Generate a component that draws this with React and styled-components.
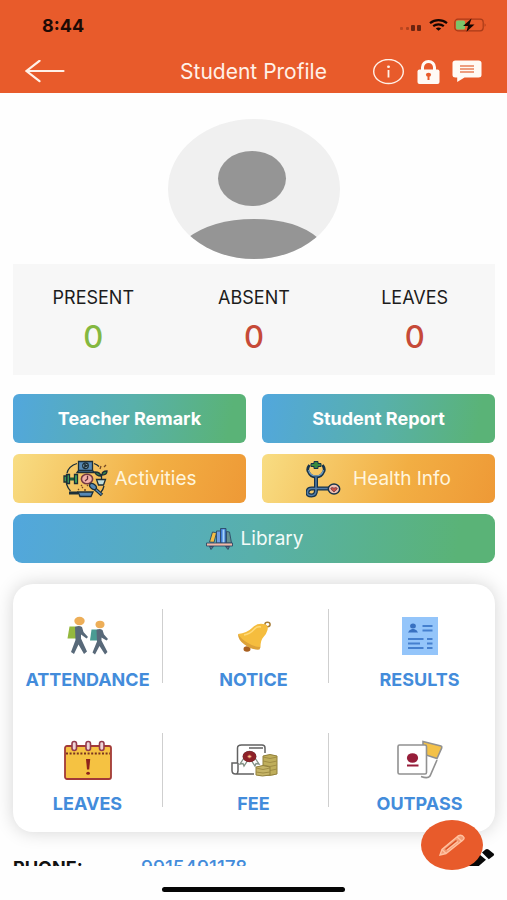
import styled, { createGlobalStyle, css } from "styled-components";

const GlobalStyle = createGlobalStyle`
  * {
    box-sizing: border-box;
  }

  body {
    margin: 0;
    background: #fefefe;
    font-family: Inter, Roboto, "Liberation Sans", sans-serif;
  }

  button {
    padding: 0;
    border: none;
    background: none;
    color: inherit;
    font: inherit;
    cursor: pointer;
  }

  svg {
    display: block;
    flex-shrink: 0;
  }
`;

const Screen = styled.div`
  position: relative;
  display: flex;
  flex-direction: column;
  height: 100vh;
  overflow: hidden;
`;

const Header = styled.header`
  background: #e85b2b;
  color: #fff1e8;
`;

const StatusBar = styled.div`
  display: flex;
  align-items: center;
  justify-content: space-between;
  height: 50px;
  padding: 0 20px 0 42px;
  color: #1d0a05;
  font-size: 18px;
  font-weight: 700;
`;

const StatusIcons = styled.div`
  display: flex;
  align-items: center;
  gap: 6px;
`;

const TitleBar = styled.div`
  display: grid;
  grid-template-columns: 1fr auto 1fr;
  align-items: center;
  height: 43px;
  padding: 0 25px;
`;

const Title = styled.h1`
  margin: 0;
  font-size: 21px;
  font-weight: 400;
  line-height: 24px;
`;

const HeaderActions = styled.div`
  display: flex;
  align-items: center;
  justify-content: flex-end;
  gap: 12px;
`;

const BackButton = styled.button`
  justify-self: start;
`;

const Content = styled.main`
  flex: 1;
  min-height: 0;
  padding: 26px 12px 0 13px;
  overflow-y: auto;
  scrollbar-width: none;
`;

const Avatar = styled.div`
  display: flex;
  justify-content: center;
  margin-bottom: 5px;
`;

const Stats = styled.dl`
  display: grid;
  grid-template-columns: repeat(3, 1fr);
  margin: 0 0 19px;
  padding: 24px 0 19px;
  background: #f7f7f7;
  text-align: center;
`;

const StatLabel = styled.dt`
  color: #1c1c1c;
  font-size: 18px;
  line-height: 20px;
`;

const StatValue = styled.dd`
  margin: 10px 0 0;
  color: ${({ $good }) => ($good ? "#84b840" : "#c64a38")};
  font-size: 31px;
  font-weight: 500;
  line-height: 38px;
`;

const Actions = styled.div`
  display: grid;
  grid-template-columns: 1fr 1fr;
  gap: 11px 16px;
  margin-bottom: 21px;
`;

const ActionButton = styled.button`
  display: flex;
  align-items: center;
  justify-content: center;
  gap: 7px;
  height: 49px;
  border-radius: 6px;
  background: linear-gradient(100deg, #52a7dd, #58b0ab 50%, #5ab377 92%);
  color: #fff;
  font-size: 18px;
  font-weight: 700;

  ${({ $tone }) =>
    $tone === "warm" &&
    css`
      background: linear-gradient(110deg, #f8dd83, #f2ae43 60%, #ee9936);
      color: #fff5dc;
      font-size: 19px;
      font-weight: 400;
    `}

  ${({ $wide }) =>
    $wide &&
    css`
      grid-column: 1 / -1;
      border-radius: 9px;
      color: #f3fbf8;
      font-size: 19px;
      font-weight: 400;
    `}
`;

const Menu = styled.nav`
  display: grid;
  grid-template-columns: repeat(3, 1fr);
  gap: 50px 16px;
  padding: 25px 0;
  border-radius: 20px;
  background: #fff;
  box-shadow: 0 0 18px rgba(0, 0, 0, 0.17);
`;

const MenuItem = styled.button`
  display: flex;
  flex-direction: column;
  align-items: center;
  gap: 14px;
  height: 74px;
  padding-top: 7px;
  border-right: 1px solid #cfcfcf;
  color: #438cdb;
  font-size: 18px;
  font-weight: 700;
  line-height: 20px;

  &:nth-child(3n) {
    border-right-color: transparent;
  }
`;

const ContactRow = styled.div`
  display: grid;
  grid-template-columns: 128px 1fr auto;
  align-items: center;
  height: 50px;
  margin-top: 11px;
  color: #111;
  font-size: 18px;
  font-weight: 700;
  line-height: 20px;
`;

const Phone = styled.a`
  color: #438cdb;
  font-size: 19px;
  font-weight: 500;
  text-decoration: none;
`;

const EditButton = styled.button`
  align-self: start;
  padding-top: 4px;
`;

const Footer = styled.footer`
  display: flex;
  justify-content: center;
  height: 34px;
  padding-top: 21px;
`;

const HomeIndicator = styled.div`
  width: 36%;
  height: 5px;
  border-radius: 3px;
  background: #050505;
`;

const Fab = styled.button`
  position: absolute;
  right: 24px;
  bottom: 30px;
  display: grid;
  place-items: center;
  width: 62px;
  height: 50px;
  border-radius: 50%;
  background: #e85b2b;
`;

const SignalIcon = () => (
  <svg width="24" height="14" viewBox="0 0 24 14" fill="#6b2410">
    <rect x="1" y="9" width="3" height="3" rx="1" opacity="0.35" />
    <rect x="7" y="9" width="3" height="3" rx="1" opacity="0.45" />
    <rect x="12" y="7" width="4" height="6" rx="1" />
    <rect x="18" y="7" width="4" height="6" rx="1" />
  </svg>
);

const WifiIcon = () => (
  <svg width="19" height="12" viewBox="0 0 19 12" fill="none" stroke="#120502" strokeWidth="2.2">
    <path d="M1 4.2C6 0.2 13 0.2 18 4.2" />
    <path d="M4.2 7.1C7.2 4.7 11.8 4.7 14.8 7.1" />
    <path d="M9.5 11.8 6.8 9.4Q9.5 7.4 12.2 9.4Z" fill="#120502" stroke="none" />
  </svg>
);

const BatteryIcon = () => (
  <svg width="33" height="14" viewBox="0 0 33 14">
    <rect x="0.8" y="1.2" width="28.4" height="11.6" rx="3" fill="none" stroke="#a93b18" strokeWidth="1.2" />
    <rect x="2" y="2.4" width="9" height="9.2" rx="1.6" fill="#7cc46a" />
    <path d="M30.6 5.2v3.6q2-1.8 0-3.6" fill="#a93b18" />
    <path d="m17.500 0.500-8.500 7.500h5l-1.500 5.800 8-7.300h-5z" fill="#120502" />
  </svg>
);

const ArrowIcon = () => (
  <svg width="40" height="24" viewBox="0 0 40 24" fill="none" stroke="#fff1e8" strokeWidth="2.2" strokeLinecap="round">
    <path d="M1.500 11H38.500M14.500 0.800 1.500 11l13 10.200" />
  </svg>
);

const InfoIcon = () => (
  <svg width="32" height="26" viewBox="0 0 32 26">
    <ellipse cx="15.500" cy="12.500" rx="14.800" ry="12" fill="none" stroke="#fff1e8" strokeWidth="1.400" />
    <ellipse cx="15.500" cy="7.800" rx="1.500" ry="1.200" fill="#fff1e8" />
    <path d="M15.500 11v7.500" stroke="#fff1e8" strokeWidth="1.800" />
  </svg>
);

const LockIcon = () => (
  <svg width="23" height="26" viewBox="0 0 23 26">
    <path d="M5.500 12V8.200a6 5.800 0 0 1 12 0V12" fill="none" stroke="#fffaf5" strokeWidth="3" />
    <rect x="0.500" y="10.500" width="22" height="14.500" rx="2" fill="#fffaf5" />
    <ellipse cx="11.500" cy="15.800" rx="2.600" ry="2" fill="#e85b2b" />
    <path d="M11.500 16v5" stroke="#e85b2b" strokeWidth="2" />
  </svg>
);

const ChatIcon = () => (
  <svg width="30" height="24" viewBox="0 0 30 24">
    <path d="M3.500 0.500h23a3 2.500 0 0 1 3 2.500v12a3 2.500 0 0 1-3 2.500H12.500L5.200 22v-4.500H3.500A3 2.500 0 0 1 .5 15V3a3 2.500 0 0 1 3-2.500Z" fill="#fffaf5" />
    <path d="M8 6h14M8 9h14M8 12h14" stroke="#e98058" strokeWidth="1.300" />
  </svg>
);

const AvatarIcon = () => (
  <svg width="172" height="140" viewBox="0 0 172 140">
    <defs>
      <clipPath id="avatar-clip">
        <ellipse cx="86" cy="70" rx="86" ry="70" />
      </clipPath>
    </defs>
    <g clipPath="url(#avatar-clip)">
      <rect width="172" height="141" fill="#f0f0f0" />
      <ellipse cx="84" cy="59.500" rx="34" ry="27.500" fill="#959595" />
      <path d="M18 120Q44 100 86 100t64 19v21H18Z" fill="#959595" />
    </g>
  </svg>
);

const ActivitiesIcon = () => (
  <svg width="45" height="38" viewBox="0 0 45 38" fill="none" stroke="#1c2f38" strokeWidth="1.300">
    <path d="M4 13C5 9 9 5 14 3.500M3.500 24c1 3 2 5 4 7M31 3.500q3 1 5 3M41 26q-1 4-3 6" />
    <path d="M15.500 1.500h14v9h-14zM14 12.500h17.500l-2-2h-14z" fill="#5689b5" />
    <circle cx="22.500" cy="5.800" r="2.800" fill="#a9d1e9" />
    <path d="m21.800 4.500 2.400 1.300-2.400 1.300z" fill="#1c2f38" />
    <path d="M5 19h8" stroke="#1d5c3b" strokeWidth="3" />
    <path d="M1 16h3v6H1zM3.500 14.500h3v9h-3zM11.500 14.500h3v9h-3z" fill="#43a860" />
    <ellipse cx="24" cy="19" rx="5.600" ry="4.800" fill="#f3b1a7" stroke="#743a44" strokeWidth="1.600" />
    <path d="M24.500 15.800V19L22 21" stroke="#602e3b" />
    <path d="M38.500 20v-6" />
    <path d="M38 16q-5 0-6-4 5 0 6 4Zm1-1q0-4 5-4 0 4-5 4Z" fill="#398b4a" />
    <path d="M33.500 19.500h9l-2 5.500h-5z" fill="#c3ddd8" />
    <path d="m37 9 1-3m3 1 2-2M15 29l1 1m3-3 1 1m4-3 1 1m-4 4h2m-5-4 1-1" stroke="#754a25" />
    <path d="m31 28 8 7" stroke="#1c2f38" strokeWidth="3.600" />
    <path d="m31 28 7.500 6.500" stroke="#5689b5" strokeWidth="1.500" />
    <ellipse cx="30" cy="26.500" rx="3.800" ry="2.400" fill="#5689b5" transform="rotate(38 30 26.500)" />
    <path d="M6 33h9" strokeWidth="3" />
    <path d="M15 32h15l-2 4.500H17z" fill="#5689b5" />
  </svg>
);

const HealthIcon = () => (
  <svg width="40" height="38" viewBox="0 0 40 38" fill="none" stroke="#17334a">
    <path d="M3.500 5Q0.500 9 2.500 12q2 5 7.500 5t7.500-5q2-3-1-7" strokeWidth="2.800" />
    <path d="M2.500 10q1.500 6 7.500 6t7.500-6" stroke="#6d9cc3" strokeWidth="1.200" />
    <path d="M10 17v13q0 5.500-4.500 5.500T1.500 32t4-3.500H24" strokeWidth="4" />
    <path d="M10 17v13q0 5.500-4.500 5.500T1.500 32t4-3.500H24" stroke="#527da8" strokeWidth="1.500" />
    <path d="M8 1.500h4v2h3v3h-3v2H8v-2H5v-3h3z" fill="#398b3e" strokeWidth="1" />
    <ellipse cx="28" cy="29" rx="5.700" ry="5" fill="#efc0b4" strokeWidth="1.500" />
    <path d="m28 32-3.200-3q.4-2.500 3.200-.8 2.800-1.700 3.200.8z" fill="#c95045" stroke="#743a44" strokeWidth="0.800" />
  </svg>
);

const LibraryIcon = () => (
  <svg width="29" height="24" viewBox="0 0 29 24" stroke="#2c4a66" strokeWidth="0.900">
    <path d="m4.500 15 3-10 4 .8-2.500 9.500z" fill="#f4bd42" />
    <path d="M11.500 4h4v12h-4z" fill="#6f9fe4" />
    <path d="M15.500 1.500H21V16h-5.500z" fill="#3e7bd8" />
    <path d="M18.500 2.500v13" stroke="#a5d4f8" strokeWidth="1.900" />
    <path d="m21.500 4.500 3 .5 2 11h-5z" fill="#65918e" />
    <path d="M1.500 16h26v3h-26z" fill="#f1b8a8" />
    <path d="M4.500 19.500h4L6 22.500zm16 0h4L23 22.500z" fill="#5c7188" />
  </svg>
);

const AttendanceIcon = () => (
  <svg width="42" height="40" viewBox="0 0 42 40">
    <path d="M2.500 10.500h7v12H.5z" fill="#94b83e" />
    <ellipse cx="12.500" cy="5" rx="5.200" ry="4.200" fill="#edae58" />
    <path d="M8 11q4-2 7 0l1.500 5 4.500 5-1.500 1.500-5.500-4v4l6 13-3 2.500-5.500-9.500-4.500 9.500-3-2 4.500-12z" fill="#586979" />
    <path d="M24.500 13.500h6.500v11h-8z" fill="#4a9c93" />
    <ellipse cx="33" cy="8.500" rx="4.500" ry="3.700" fill="#edae58" />
    <path d="M29.500 14q3-2 6 0l1.500 4.500 4 4.500-1.500 1.500-5-3v3l6 11.500-2.500 2.500-5.500-8.500-4.500 8.500-2.500-2 4.500-11z" fill="#586979" />
  </svg>
);

const NoticeIcon = () => (
  <svg width="36" height="40" viewBox="0 0 36 40">
    <ellipse cx="31.500" cy="8.500" rx="2.600" ry="2.200" fill="none" stroke="#a77c35" strokeWidth="1.500" />
    <ellipse cx="11" cy="33" rx="3.500" ry="2.700" fill="#a96020" />
    <path d="M2 18q9-1 14-6 5-5 11-4 6 0 4.500 6-1 4-4 7-3 3-3 10-3 3-9.500 1Q4 27 2 18Z" fill="#f5bd3e" />
    <path d="M2 18q4 6 10 9 6 4 12.500 4l-1 2.500q-7 1-15-5Q2 24 2 18Z" fill="#dda238" />
    <path d="M8 19q6-1 10-5.500 3-3.500 7-2.500" fill="none" stroke="#ffda79" strokeWidth="1.500" />
  </svg>
);

const ResultsIcon = () => (
  <svg width="36" height="40" viewBox="0 0 36 40">
    <rect y="1" width="36" height="38" fill="#94c5fa" />
    <ellipse cx="11" cy="10" rx="2.900" ry="2.500" fill="#3971c1" />
    <path d="M6 16.500q1-3 4-3.500h2q3 .5 4 3.500z" fill="#3971c1" />
    <path d="M20.500 10h10M20.500 14.500h10M6 23h15.500M25 23h5.500M6 27.500h12M25 27.500h5.500M6 32h15.500M25 32h5.500" stroke="#4580cf" strokeWidth="2" />
  </svg>
);

const LeavesIcon = () => (
  <svg width="48" height="40" viewBox="0 0 48 40">
    <rect x="1" y="6" width="46" height="33" rx="2" fill="#f5c242" stroke="#a23a38" strokeWidth="1.800" />
    <path d="M2 13.500h44" stroke="#79341f" strokeWidth="1.800" strokeDasharray="2 1.600" />
    <g fill="#edd4d8" stroke="#943b4b" strokeWidth="1.600">
      <rect x="8" y="1.500" width="4.500" height="9" rx="2.200" />
      <rect x="22" y="1.500" width="4.500" height="9" rx="2.200" />
      <rect x="35.500" y="1.500" width="4.500" height="9" rx="2.200" />
    </g>
    <path d="M22 19h4.200l-1 10.500h-2.200z" fill="#8e241c" />
    <ellipse cx="24.100" cy="33.200" rx="1.900" ry="1.500" fill="#8e241c" />
  </svg>
);

const FeeIcon = () => (
  <svg width="48" height="40" viewBox="0 0 48 40" fill="none" stroke="#626262" strokeWidth="1.500">
    <path d="M7.500 23V8q0-3 4-3h20.500q3 0 3 3v5M19 8h14M7.500 23H2v7.500q0 3.500 3.500 3.500 2.500 0 2.500-3.500V23M5.500 34H24" />
    <path d="m14 18-4 6 3-.5 1 2.500 4-6m3 0 4 6 1-2.500 3 .5-4-6" stroke="#839186" strokeWidth="1.300" />
    <ellipse cx="19.500" cy="16.500" rx="6.200" ry="5" fill="#8e2027" />
    <ellipse cx="19.500" cy="16.500" rx="6" ry="4.800" stroke="#8e2027" />
    <ellipse cx="19.500" cy="16.500" rx="1.800" ry="1.500" fill="#f7ce8d" stroke="#bf5147" strokeWidth="1" />
    <path d="M33 16v18q6 3 14 0V16q-7-3-14 0Z" fill="#bfae5b" stroke="#92813d" strokeWidth="1" />
    <path d="M33 17q7 3 14 0M33 21q7 3 14 0M33 25q7 3 14 0M33 29q7 3 14 0" stroke="#a08d44" strokeWidth="1" />
    <path d="M26 27v8q6 2 14 0v-8q-7-3-14 0Z" fill="#c6b568" stroke="#92813d" strokeWidth="1" />
    <path d="M26 28q7 3 14 0M26 32q7 2 14 0" stroke="#a08d44" strokeWidth="1" />
  </svg>
);

const OutpassIcon = () => (
  <svg width="46" height="40" viewBox="0 0 46 40" fill="none" stroke="#919191" strokeWidth="1.600">
    <path d="m26 1.500 18 4.500q1 0 .7 2L40 18.500 26 14z" fill="#f3c149" />
    <path d="M40 20 33 36q-2 3-9 .5" />
    <rect x="1" y="5" width="28.500" height="29" rx="1.500" fill="#fff" />
    <ellipse cx="15.500" cy="18" rx="5.600" ry="4.800" fill="#961d39" stroke="none" />
    <path d="M10 25.500h11.500" stroke="#961d39" strokeWidth="2" />
  </svg>
);

const PencilIcon = () => (
  <svg width="28" height="24" viewBox="0 0 28 24" fill="none" stroke="#ffc2a1" strokeWidth="1.400">
    <path d="M2 22 4 16.500 20 3q4-2 6 1.500.5 1.500-1 2.500L8 20.500z" fill="#f39b74" />
    <path d="m4 16.500 4 4M19 4l5 4.500M9 17 20 8.500" />
    <path d="m7.500 16.500 11-9" stroke="#d84e22" />
  </svg>
);

const EditIcon = () => (
  <svg width="28" height="24" viewBox="0 0 28 24" fill="#080808">
    <path d="M0 18 12.500 7.500l6.500 5.300L6 24H0z" />
    <path d="m15 5.500 3.500-3q1.500-1 3 0l5 4q1.200 1 0 2.200l-4.700 3.600z" />
  </svg>
);

const stats = [
  { label: "PRESENT", value: 0, good: true },
  { label: "ABSENT", value: 0 },
  { label: "LEAVES", value: 0 },
];

const menu = [
  { label: "ATTENDANCE", Icon: AttendanceIcon },
  { label: "NOTICE", Icon: NoticeIcon },
  { label: "RESULTS", Icon: ResultsIcon },
  { label: "LEAVES", Icon: LeavesIcon },
  { label: "FEE", Icon: FeeIcon },
  { label: "OUTPASS", Icon: OutpassIcon },
];

const App = () => (
  <>
    <GlobalStyle />
    <Screen>
      <Header>
        <StatusBar>
          <span>8:44</span>
          <StatusIcons>
            <SignalIcon />
            <WifiIcon />
            <BatteryIcon />
          </StatusIcons>
        </StatusBar>
        <TitleBar>
          <BackButton aria-label="Back">
            <ArrowIcon />
          </BackButton>
          <Title>Student Profile</Title>
          <HeaderActions>
            <button aria-label="Info">
              <InfoIcon />
            </button>
            <button aria-label="Lock">
              <LockIcon />
            </button>
            <button aria-label="Messages">
              <ChatIcon />
            </button>
          </HeaderActions>
        </TitleBar>
      </Header>

      <Content>
        <Avatar>
          <AvatarIcon />
        </Avatar>

        <Stats>
          {stats.map(({ label, value, good }) => (
            <div key={label}>
              <StatLabel>{label}</StatLabel>
              <StatValue $good={good}>{value}</StatValue>
            </div>
          ))}
        </Stats>

        <Actions>
          <ActionButton>Teacher Remark</ActionButton>
          <ActionButton>Student Report</ActionButton>
          <ActionButton $tone="warm">
            <ActivitiesIcon />
            Activities
          </ActionButton>
          <ActionButton $tone="warm">
            <HealthIcon />
            Health Info
          </ActionButton>
          <ActionButton $wide>
            <LibraryIcon />
            Library
          </ActionButton>
        </Actions>

        <Menu>
          {menu.map(({ label, Icon }) => (
            <MenuItem key={label}>
              <Icon />
              {label}
            </MenuItem>
          ))}
        </Menu>

        <ContactRow>
          <span>PHONE:</span>
          <Phone href="tel:9915491178">9915491178</Phone>
          <EditButton aria-label="Edit phone">
            <EditIcon />
          </EditButton>
        </ContactRow>
      </Content>

      <Footer>
        <HomeIndicator />
      </Footer>

      <Fab aria-label="Edit profile">
        <PencilIcon />
      </Fab>
    </Screen>
  </>
);

export default App;
